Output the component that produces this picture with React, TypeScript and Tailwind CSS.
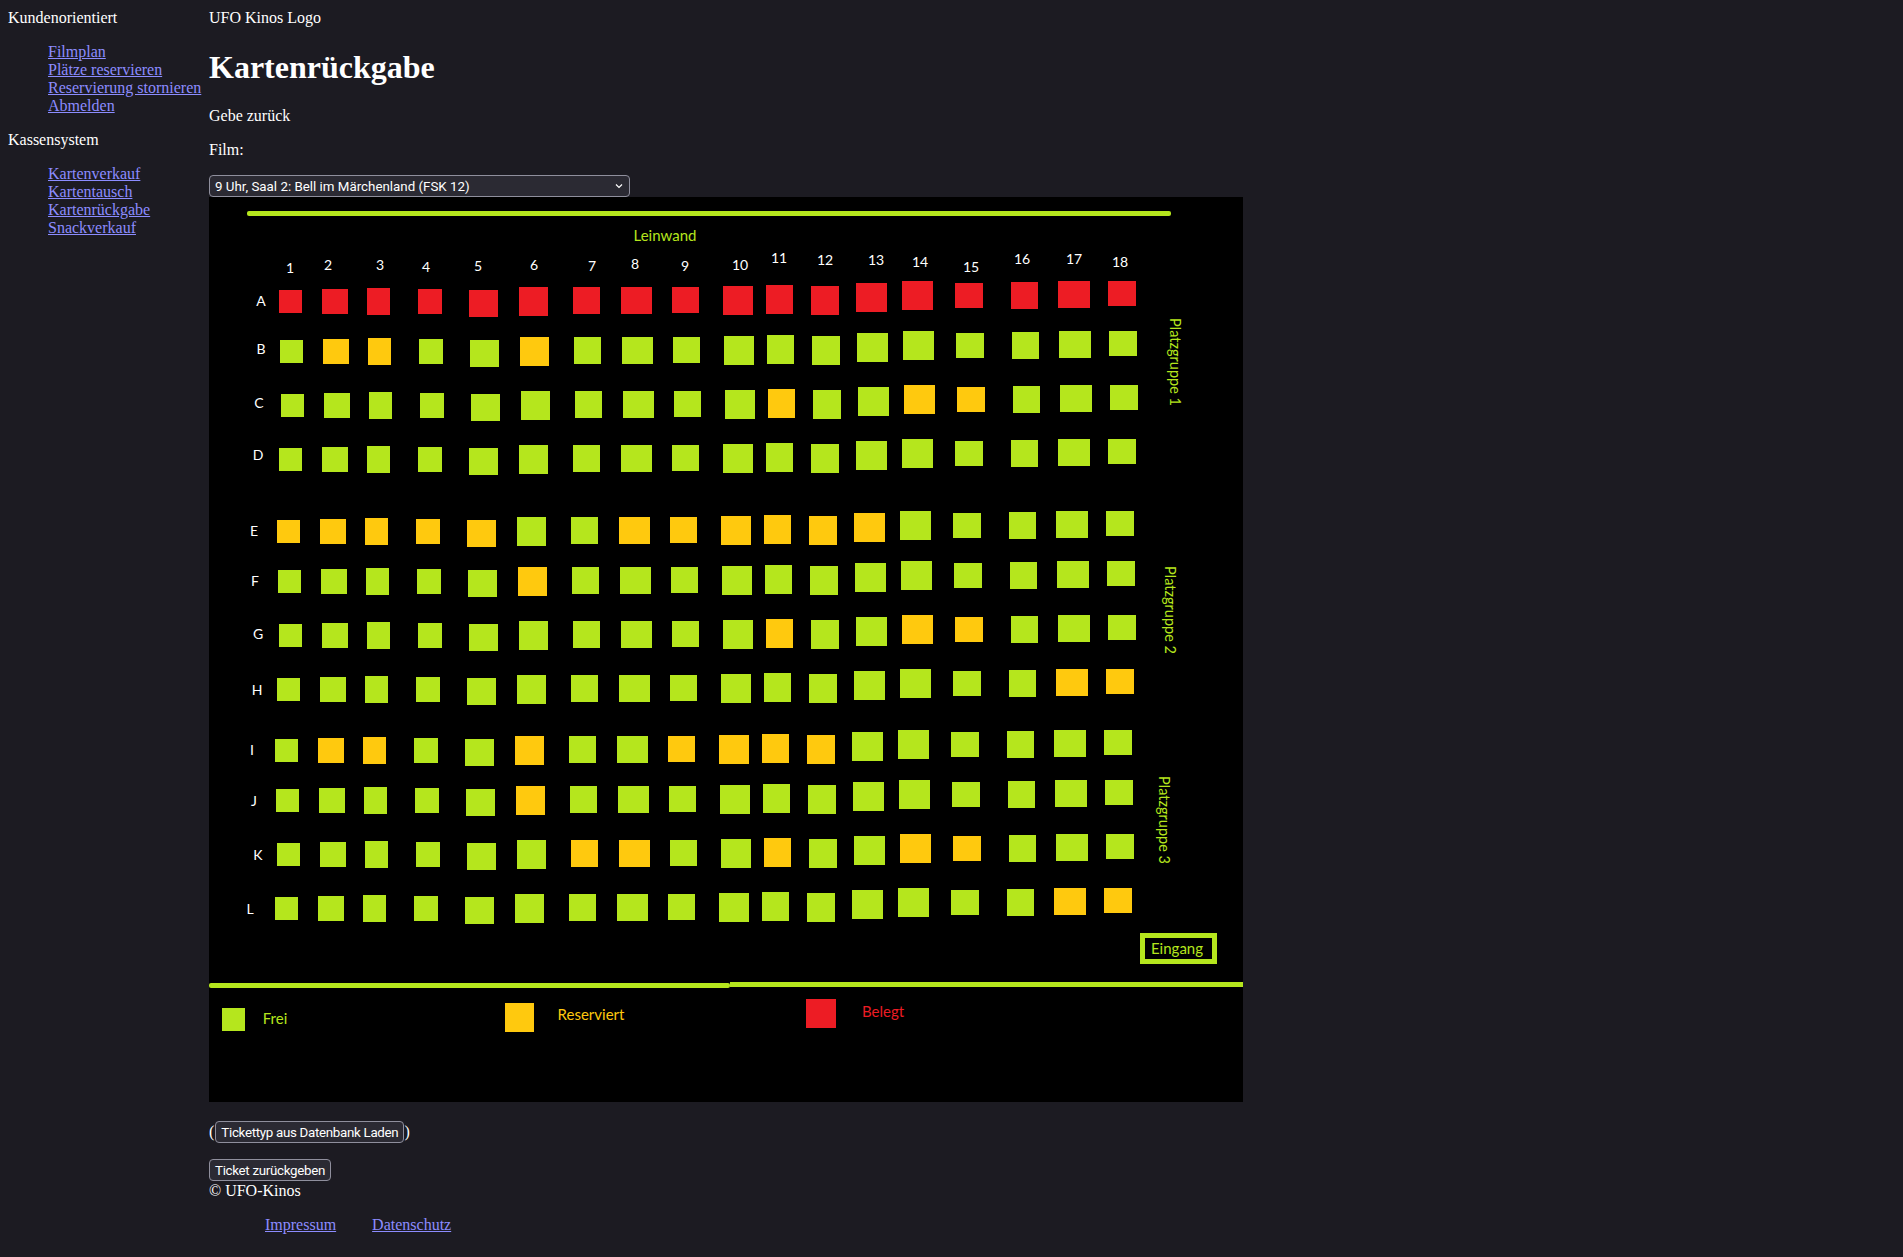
const RED = "#ed1c24";
const YELLOW = "#ffc90e";
const GREEN = "#b5e61d";

// x, width, y, height of each seat in row A, the image is hand drawn so none of them line up
const seatCols = [
  [279, 23, 290, 23],
  [322, 26, 289, 25],
  [367, 23, 288, 27],
  [418, 24, 289, 25],
  [469, 29, 290, 27],
  [519, 29, 287, 29],
  [573, 27, 287, 27],
  [621, 31, 287, 27],
  [672, 27, 287, 26],
  [723, 30, 286, 29],
  [766, 27, 285, 29],
  [811, 28, 286, 29],
  [856, 31, 283, 29],
  [902, 31, 281, 29],
  [955, 28, 283, 25],
  [1011, 27, 282, 27],
  [1058, 32, 281, 27],
  [1108, 28, 281, 25],
];

const rows = [
  { name: "A", dx: 0, dy: 0, lx: 261, ly: 300, reserved: [] as number[] },
  { name: "B", dx: 1, dy: 50, lx: 261, ly: 348, reserved: [2, 3, 6] },
  { name: "C", dx: 2, dy: 104, lx: 259, ly: 402, reserved: [11, 14, 15] },
  { name: "D", dx: 0, dy: 158, lx: 258, ly: 454, reserved: [] },
  { name: "E", dx: -2, dy: 230, lx: 254, ly: 530, reserved: [1, 2, 3, 4, 5, 8, 9, 10, 11, 12, 13] },
  { name: "F", dx: -1, dy: 280, lx: 255, ly: 580, reserved: [6] },
  { name: "G", dx: 0, dy: 334, lx: 258, ly: 633, reserved: [11, 14, 15] },
  { name: "H", dx: -2, dy: 388, lx: 257, ly: 689, reserved: [17, 18] },
  { name: "I", dx: -4, dy: 449, lx: 252, ly: 749, reserved: [2, 3, 6, 9, 10, 11, 12] },
  { name: "J", dx: -3, dy: 499, lx: 254, ly: 800, reserved: [6] },
  { name: "K", dx: -2, dy: 553, lx: 258, ly: 854, reserved: [7, 8, 11, 14, 15] },
  { name: "L", dx: -4, dy: 607, lx: 250, ly: 908, reserved: [17, 18] },
];

const colLabels = [
  [290, 267], [328, 264], [380, 264], [426, 266], [478, 265], [534, 264],
  [592, 265], [635, 263], [685, 265], [740, 264], [779, 257], [825, 259],
  [876, 259], [920, 261], [971, 266], [1022, 258], [1074, 258], [1120, 261],
];

const groups = [
  { label: "Platzgruppe 1", x: 1175, y: 362 },
  { label: "Platzgruppe 2", x: 1170, y: 610 },
  { label: "Platzgruppe 3", x: 1164, y: 820 },
];

function Label({ x, y, fill, size = 15, children }: { x: number; y: number; fill: string; size?: number; children: React.ReactNode }) {
  return (
    <text x={x} y={y} fill={fill} fontSize={size} textAnchor="middle" dominantBaseline="central">
      {children}
    </text>
  );
}

function SeatMap() {
  return (
    <svg
      viewBox="209 197 1034 905"
      className="block w-[1034px] h-[905px] bg-black font-['Lato',sans-serif]"
    >
      {/* Leinwand */}
      <rect x={247} y={211} width={924} height={5} rx={2} fill={GREEN} />
      <Label x={665} y={235} fill={GREEN}>Leinwand</Label>

      {colLabels.map(([x, y], i) => (
        <Label key={i} x={x} y={y} fill="#fff" size={14}>{i + 1}</Label>
      ))}

      {rows.map((row) => (
        <g key={row.name}>
          <Label x={row.lx} y={row.ly} fill="#fff" size={14}>{row.name}</Label>
          {seatCols.map(([x, w, y, h], i) => {
            const color = row.name === "A" ? RED : row.reserved.includes(i + 1) ? YELLOW : GREEN;
            return <rect key={i} x={x + row.dx} y={y + row.dy} width={w} height={h} fill={color} />;
          })}
        </g>
      ))}

      {groups.map((g) => (
        <text
          key={g.label}
          x={g.x}
          y={g.y}
          fill={GREEN}
          fontSize={14.5}
          textAnchor="middle"
          dominantBaseline="central"
          transform={`rotate(90 ${g.x} ${g.y})`}
        >
          {g.label}
        </text>
      ))}

      {/* Eingang */}
      <rect x={1142.5} y={935.5} width={72} height={26} fill="none" stroke={GREEN} strokeWidth={5} />
      <Label x={1177} y={948} fill={GREEN}>Eingang</Label>

      <rect x={209} y={983} width={521} height={5} rx={2} fill={GREEN} />
      <rect x={730} y={982} width={513} height={5} fill={GREEN} />

      {/* Legende */}
      <rect x={222} y={1008} width={23} height={23} fill={GREEN} />
      <Label x={275} y={1018} fill={GREEN}>Frei</Label>
      <rect x={505} y={1003} width={29} height={29} fill={YELLOW} />
      <Label x={591} y={1014} fill={YELLOW}>Reserviert</Label>
      <rect x={806} y={999} width={30} height={29} fill={RED} />
      <Label x={883} y={1011} fill={RED}>Belegt</Label>
    </svg>
  );
}

function NavGroup({ title, links }: { title: string; links: string[] }) {
  return (
    <div className="mb-4">
      <div>{title}</div>
      <div className="mt-4 ml-10 flex flex-col items-start">
        {links.map((l) => (
          <a key={l} href="#" className="text-[#8c8cff] underline whitespace-nowrap">
            {l}
          </a>
        ))}
      </div>
    </div>
  );
}

const buttonClass =
  "h-[22px] px-[5px] pt-px rounded-[4px] border border-[#8f8f9d] bg-[#2b2a33] text-white text-[13.33px] tracking-[-0.3px] leading-none font-['Roboto',sans-serif]";

export default function App() {
  return (
    <div className="min-h-[1257px] bg-[#1c1b22] text-white text-base leading-[18px] font-['Liberation_Serif',serif] flex pt-[9px]">
      <aside className="w-[193px] ml-2 shrink-0">
        <NavGroup
          title="Kundenorientiert"
          links={["Filmplan", "Plätze reservieren", "Reservierung stornieren", "Abmelden"]}
        />
        <NavGroup title="Kassensystem" links={["Kartenverkauf", "Kartentausch", "Kartenrückgabe", "Snackverkauf"]} />
      </aside>

      <main className="ml-2">
        <div>UFO Kinos Logo</div>
        <h1 className="text-[32px] leading-[37px] font-bold mt-[22px] mb-[21px]">Kartenrückgabe</h1>
        <p>Gebe zurück</p>
        <p className="mt-4">Film:</p>
        <div className="relative w-[421px] mt-4">
          <select className="block w-full h-[22px] pl-[5px] pt-px appearance-none rounded-[4px] border border-[#8f8f9d] bg-[#2b2a33] text-white text-[13.33px] font-['Roboto',sans-serif]">
            <option>9 Uhr, Saal 2: Bell im Märchenland (FSK 12)</option>
          </select>
          <svg viewBox="0 0 8 6" className="absolute right-[7px] top-[8px] w-2 h-[6px] pointer-events-none">
            <path d="M1 1.5 L4 4.5 L7 1.5" fill="none" stroke="#fff" strokeWidth="1.2" />
          </svg>
        </div>
        <SeatMap />

        <div className="mt-[19px] flex items-center h-[22px]">
          <span>(</span>
          <button className={`${buttonClass} ml-px`}>Tickettyp aus Datenbank Laden</button>
          <span>)</span>
        </div>
        <button className={`${buttonClass} block mt-4`}>Ticket zurückgeben</button>
        <div className="mt-px">© UFO-Kinos</div>
        <div className="mt-4 ml-14 flex gap-9">
          <a href="#" className="text-[#8c8cff] underline">Impressum</a>
          <a href="#" className="text-[#8c8cff] underline">Datenschutz</a>
        </div>
      </main>
    </div>
  );
}
